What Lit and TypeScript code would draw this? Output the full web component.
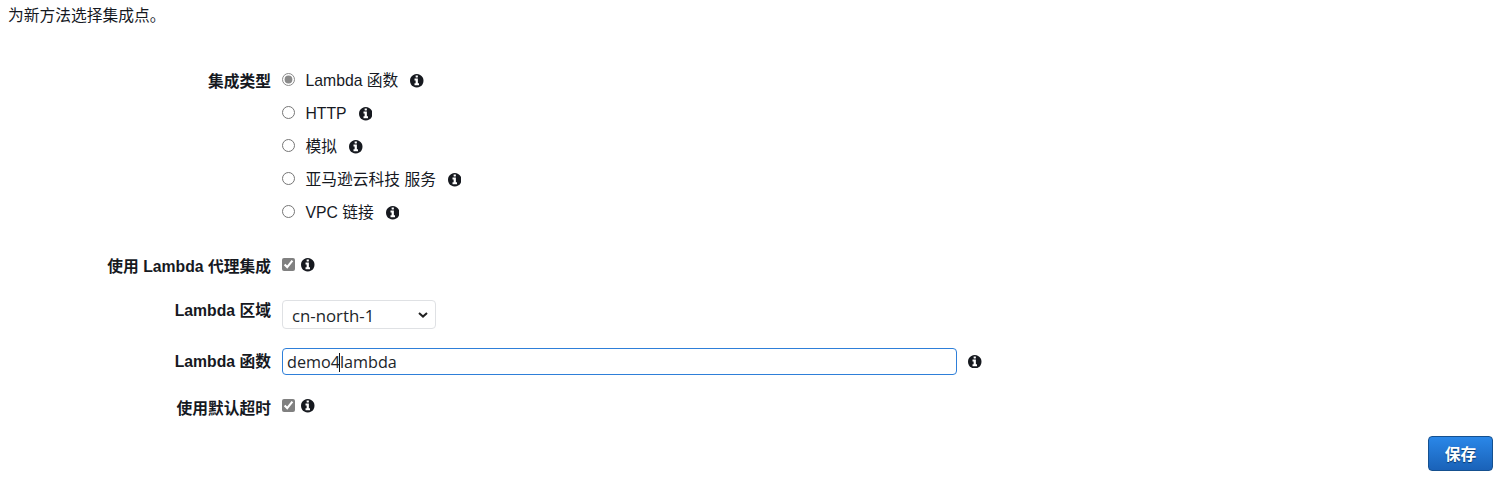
import { LitElement, html, css, svg } from 'lit';
import { customElement } from 'lit/decorators.js';

const infoIcon = html`<svg class="info" viewBox="0 128 1536 1536" aria-hidden="true">
  ${svg`<path fill="#16191f" d="M1024 1376v-160q0-14-9-23t-23-9h-96v-512q0-14-9-23t-23-9h-320q-14 0-23 9t-9 23v160q0 14 9 23t23 9h96v320h-96q-14 0-23 9t-9 23v160q0 14 9 23t23 9h448q14 0 23-9t9-23zm-128-896v-160q0-14-9-23t-23-9h-192q-14 0-23 9t-9 23v160q0 14 9 23t23 9h192q14 0 23-9t9-23zm640 416q0 209-103 385.5t-279.5 279.5-385.5 103-385.5-103-279.5-279.5-103-385.5 103-385.5 279.5-279.5 385.5-103 385.5 103 279.5 279.5 103 385.5z"/>`}
</svg>`;

const integrationTypes = [
  { label: 'Lambda 函数', checked: true },
  { label: 'HTTP', checked: false },
  { label: '模拟', checked: false },
  { label: '亚马逊云科技 服务', checked: false },
  { label: 'VPC 链接', checked: false },
];

@customElement('app-root')
export class AppRoot extends LitElement {
  static styles = css`
    :host {
      display: block;
      height: 501px;
      background: #fff;
      color: #16191f;
      font-family: 'Liberation Sans', 'Noto Sans CJK SC', sans-serif;
      font-size: 15.75px;
      overflow: hidden;
    }

    .desc {
      height: 32px;
      line-height: 32px;
      padding-left: 8px;
    }

    .form {
      padding-top: 32px;
      display: flex;
      flex-direction: column;
    }

    .row {
      display: grid;
      grid-template-columns: 271px 1fr;
      column-gap: 11px;
    }

    .row-proxy {
      margin-top: 21px;
    }
    .row-region {
      margin-top: 20px;
    }
    .row-fn {
      margin-top: 19px;
    }
    .row-timeout {
      margin-top: 16px;
    }

    .label {
      text-align: right;
      font-weight: bold;
      line-height: 20px;
    }
    .label-types {
      padding-top: 8px;
    }
    .label-proxy {
      padding-top: 7px;
    }
    .label-region {
      padding-top: 1px;
    }
    .label-fn {
      padding-top: 4px;
    }
    .label-timeout {
      padding-top: 8px;
    }

    .radios {
      display: flex;
      flex-direction: column;
    }
    .radio-row {
      display: flex;
      align-items: center;
      height: 33px;
    }
    .radio-row input {
      width: 13px;
      height: 13px;
      margin: 0 10.5px 2px 0;
      accent-color: #8a8a8a;
    }
    .radio-row span {
      margin-right: 12px;
      padding-top: 1px;
      line-height: 20px;
    }
    .radio-row .info {
      margin-top: 1px;
    }

    .check-row {
      display: flex;
      align-items: center;
      height: 30px;
      gap: 6px;
    }
    .check-row input {
      width: 13px;
      height: 13px;
      margin: 0 0 1px 0;
      accent-color: #808080;
    }

    .info {
      width: 13.5px;
      height: 13.5px;
      flex: none;
    }

    select {
      display: block;
      appearance: none;
      box-sizing: border-box;
      width: 154px;
      height: 29px;
      padding: 2px 5px 0 9px;
      background: #fff
        url("data:image/svg+xml,%3Csvg xmlns='http://www.w3.org/2000/svg' width='10' height='6'%3E%3Cpath d='M1 1l4 3.6L9 1' fill='none' stroke='%23222' stroke-width='2'/%3E%3C/svg%3E")
        no-repeat right 7px center;
      border: 1px solid #dfe1e4;
      border-radius: 4px;
      color: #212529;
      font-family: 'Open Sans', sans-serif;
      font-size: 16.8px;
    }

    .fn-field {
      display: flex;
      align-items: center;
      gap: 11px;
    }
    .fn-input {
      position: relative;
      width: 675px;
    }
    .fn-input input {
      display: block;
      box-sizing: border-box;
      width: 100%;
      height: 27px;
      padding: 0 4px;
      border: 1px solid #2e7fd9;
      border-radius: 4px;
      outline: none;
      color: #212529;
      font-family: 'Open Sans', sans-serif;
      font-size: 16.2px;
    }
    /* mouse pointer I-beam sitting over the text */
    .ibeam {
      position: absolute;
      left: 57px;
      top: 5px;
      width: 1px;
      height: 19px;
      background: #111;
    }

    .actions {
      display: flex;
      justify-content: flex-end;
      margin-top: 15px;
      padding-right: 12px;
    }
    .save {
      box-sizing: border-box;
      width: 65px;
      height: 35px;
      border: 1px solid #15508f;
      border-radius: 4px;
      background: linear-gradient(#2a87e8, #1a62b8);
      color: #fff;
      font: bold 15.75px 'Liberation Sans', 'Noto Sans CJK SC', sans-serif;
      text-shadow: 0 1px 1px #0b3766;
    }
  `;

  render() {
    return html`
      <div class="desc">为新方法选择集成点。</div>
      <form class="form">
        <div class="row">
          <div class="label label-types">集成类型</div>
          <div class="radios">
            ${integrationTypes.map(
              t => html`<label class="radio-row">
                <input type="radio" name="type" ?checked=${t.checked} />
                <span>${t.label}</span>
                ${infoIcon}
              </label>`
            )}
          </div>
        </div>
        <div class="row row-proxy">
          <div class="label label-proxy">使用 Lambda 代理集成</div>
          <div class="check-row"><input type="checkbox" checked />${infoIcon}</div>
        </div>
        <div class="row row-region">
          <div class="label label-region">Lambda 区域</div>
          <div>
            <select><option>cn-north-1</option></select>
          </div>
        </div>
        <div class="row row-fn">
          <div class="label label-fn">Lambda 函数</div>
          <div class="fn-field">
            <div class="fn-input">
              <input type="text" .value=${'demo4lambda'} />
              <div class="ibeam"></div>
            </div>
            ${infoIcon}
          </div>
        </div>
        <div class="row row-timeout">
          <div class="label label-timeout">使用默认超时</div>
          <div class="check-row"><input type="checkbox" checked />${infoIcon}</div>
        </div>
        <div class="actions"><button class="save" type="button">保存</button></div>
      </form>
    `;
  }
}
